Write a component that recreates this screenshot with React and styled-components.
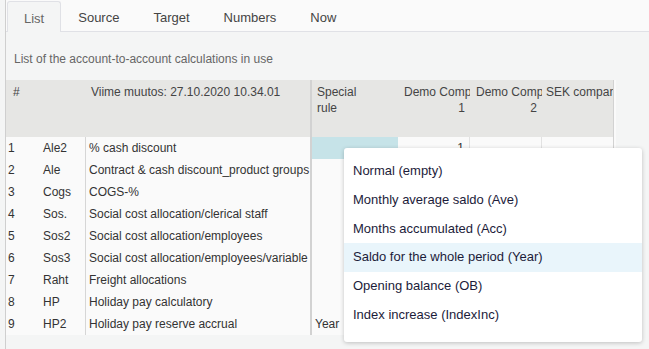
import React from "react";
import styled, { createGlobalStyle } from "styled-components";

const GlobalStyle = createGlobalStyle`
  html, body {
    margin: 0;
    padding: 0;
    background: #f4f5f5;
    font-family: "Liberation Sans", Arial, sans-serif;
    font-size: 12px;
    color: #333;
  }
`;

const Page = styled.div`
  margin-left: 5px;
  border-left: 1px solid #cfcfcf;
  height: 349px;
  position: relative;
  overflow: hidden;
`;

const TabBar = styled.div`
  display: flex;
  height: 32px;
  background: #fafafa;
  border-bottom: 1px solid #e0e1e6;
  box-sizing: border-box;
  padding-left: 1px;
`;

const Tab = styled.div`
  display: flex;
  align-items: center;
  padding: 2px 16px 0;
  margin-top: 1px;
  font-size: 13px;
  color: ${(p) => (p.active ? "#666" : "#444")};
  background: ${(p) => (p.active ? "#f4f5f5" : "transparent")};
  border: 1px solid ${(p) => (p.active ? "#e0e1e6" : "transparent")};
  border-bottom: none;
  border-radius: 3px 3px 0 0;
  margin-bottom: ${(p) => (p.active ? "-1px" : "0")};
`;

const Description = styled.div`
  height: 48px;
  padding: 6px 8px 0;
  display: flex;
  align-items: center;
  color: #666;
  box-sizing: border-box;
`;

const Table = styled.div`
  display: grid;
  grid-template-columns: 35px 44px 225px 88px 72px 72px 72px;
  width: 610px;
  background: #fafafa;
`;

const HeadCell = styled.div`
  background: #e6e6e4;
  height: 57px;
  box-sizing: border-box;
  padding: 4px ${(p) => p.padRight || 6}px 0 ${(p) => p.padLeft || 6}px;
  line-height: 16px;
  color: #444;
  text-align: ${(p) => (p.right ? "right" : "left")};
  overflow: hidden;
  border-left: ${(p) => (p.divider ? "2px solid #d2d2d2" : "none")};
  border-right: ${(p) => (p.last ? "1px solid #d2d2d2" : "none")};
  grid-column: ${(p) => p.span || "auto"};
`;

const Cell = styled.div`
  height: 22px;
  line-height: 22px;
  box-sizing: border-box;
  padding: 0 ${(p) => (p.right ? 5 : 3)}px 0 ${(p) => p.padLeft ?? 3}px;
  white-space: nowrap;
  overflow: hidden;
  text-align: ${(p) => (p.right ? "right" : "left")};
  background: ${(p) => (p.selected ? "#c6e3e8" : "transparent")};
  border-left: ${(p) =>
    p.divider ? "2px solid #d2d2d2" : p.line ? "1px solid #d6d6d6" : "none"};
  border-right: ${(p) =>
    p.last ? "1px solid #d2d2d2" : p.grid ? "1px solid #e2e2e2" : "none"};
`;

const Dropdown = styled.div`
  position: absolute;
  left: 338px;
  top: 148px;
  width: 298px;
  height: 194px;
  box-sizing: border-box;
  background: #fff;
  border-radius: 3px;
  box-shadow: 0 1px 4px rgba(0, 0, 0, 0.22);
  padding-top: 9px;
`;

const Option = styled.div`
  height: 28.8px;
  line-height: 28px;
  padding: 0 9px;
  font-size: 13px;
  color: #1c1c3a;
  background: ${(p) => (p.hover ? "#e9f5fb" : "transparent")};
`;

const rows = [
  ["1", "Ale2", "% cash discount", ""],
  ["2", "Ale", "Contract & cash discount_product groups", ""],
  ["3", "Cogs", "COGS-%", ""],
  ["4", "Sos.", "Social cost allocation/clerical staff", ""],
  ["5", "Sos2", "Social cost allocation/employees", ""],
  ["6", "Sos3", "Social cost allocation/employees/variable", ""],
  ["7", "Raht", "Freight allocations", ""],
  ["8", "HP", "Holiday pay calculatory", ""],
  ["9", "HP2", "Holiday pay reserve accrual", "Year"],
];

const options = [
  "Normal (empty)",
  "Monthly average saldo (Ave)",
  "Months accumulated (Acc)",
  "Saldo for the whole period (Year)",
  "Opening balance (OB)",
  "Index increase (IndexInc)",
];

const tabs = ["List", "Source", "Target", "Numbers", "Now"];

export default function App() {
  return (
    <>
      <GlobalStyle />
      <Page>
        <TabBar>
          {tabs.map((t, i) => (
            <Tab key={t} active={i === 0}>
              {t}
            </Tab>
          ))}
        </TabBar>
        <Description>List of the account-to-account calculations in use</Description>
        <Table>
          <HeadCell span="1 / span 2" padLeft={7}>#</HeadCell>
          <HeadCell>Viime muutos: 27.10.2020 10.34.01</HeadCell>
          <HeadCell divider padLeft={5}>
            Special
            <br />
            rule
          </HeadCell>
          <HeadCell right padRight={5}>Demo{"\u00a0"}Company 1</HeadCell>
          <HeadCell right padRight={5}>Demo{"\u00a0"}Company 2</HeadCell>
          <HeadCell last padLeft={4}>SEK{"\u00a0"}company</HeadCell>

          {rows.map((r, i) => (
            <React.Fragment key={r[0]}>
              <Cell padLeft={2}>{r[0]}</Cell>
              <Cell padLeft={2}>{r[1]}</Cell>
              <Cell line>{r[2]}</Cell>
              <Cell divider selected={i === 0}>{r[3]}</Cell>
              <Cell right grid={i === 0}>{i === 0 ? "1" : ""}</Cell>
              <Cell right grid={i === 0}></Cell>
              <Cell last></Cell>
            </React.Fragment>
          ))}
        </Table>
        <Dropdown>
          {options.map((o, i) => (
            <Option key={o} hover={i === 3}>
              {o}
            </Option>
          ))}
        </Dropdown>
      </Page>
    </>
  );
}
